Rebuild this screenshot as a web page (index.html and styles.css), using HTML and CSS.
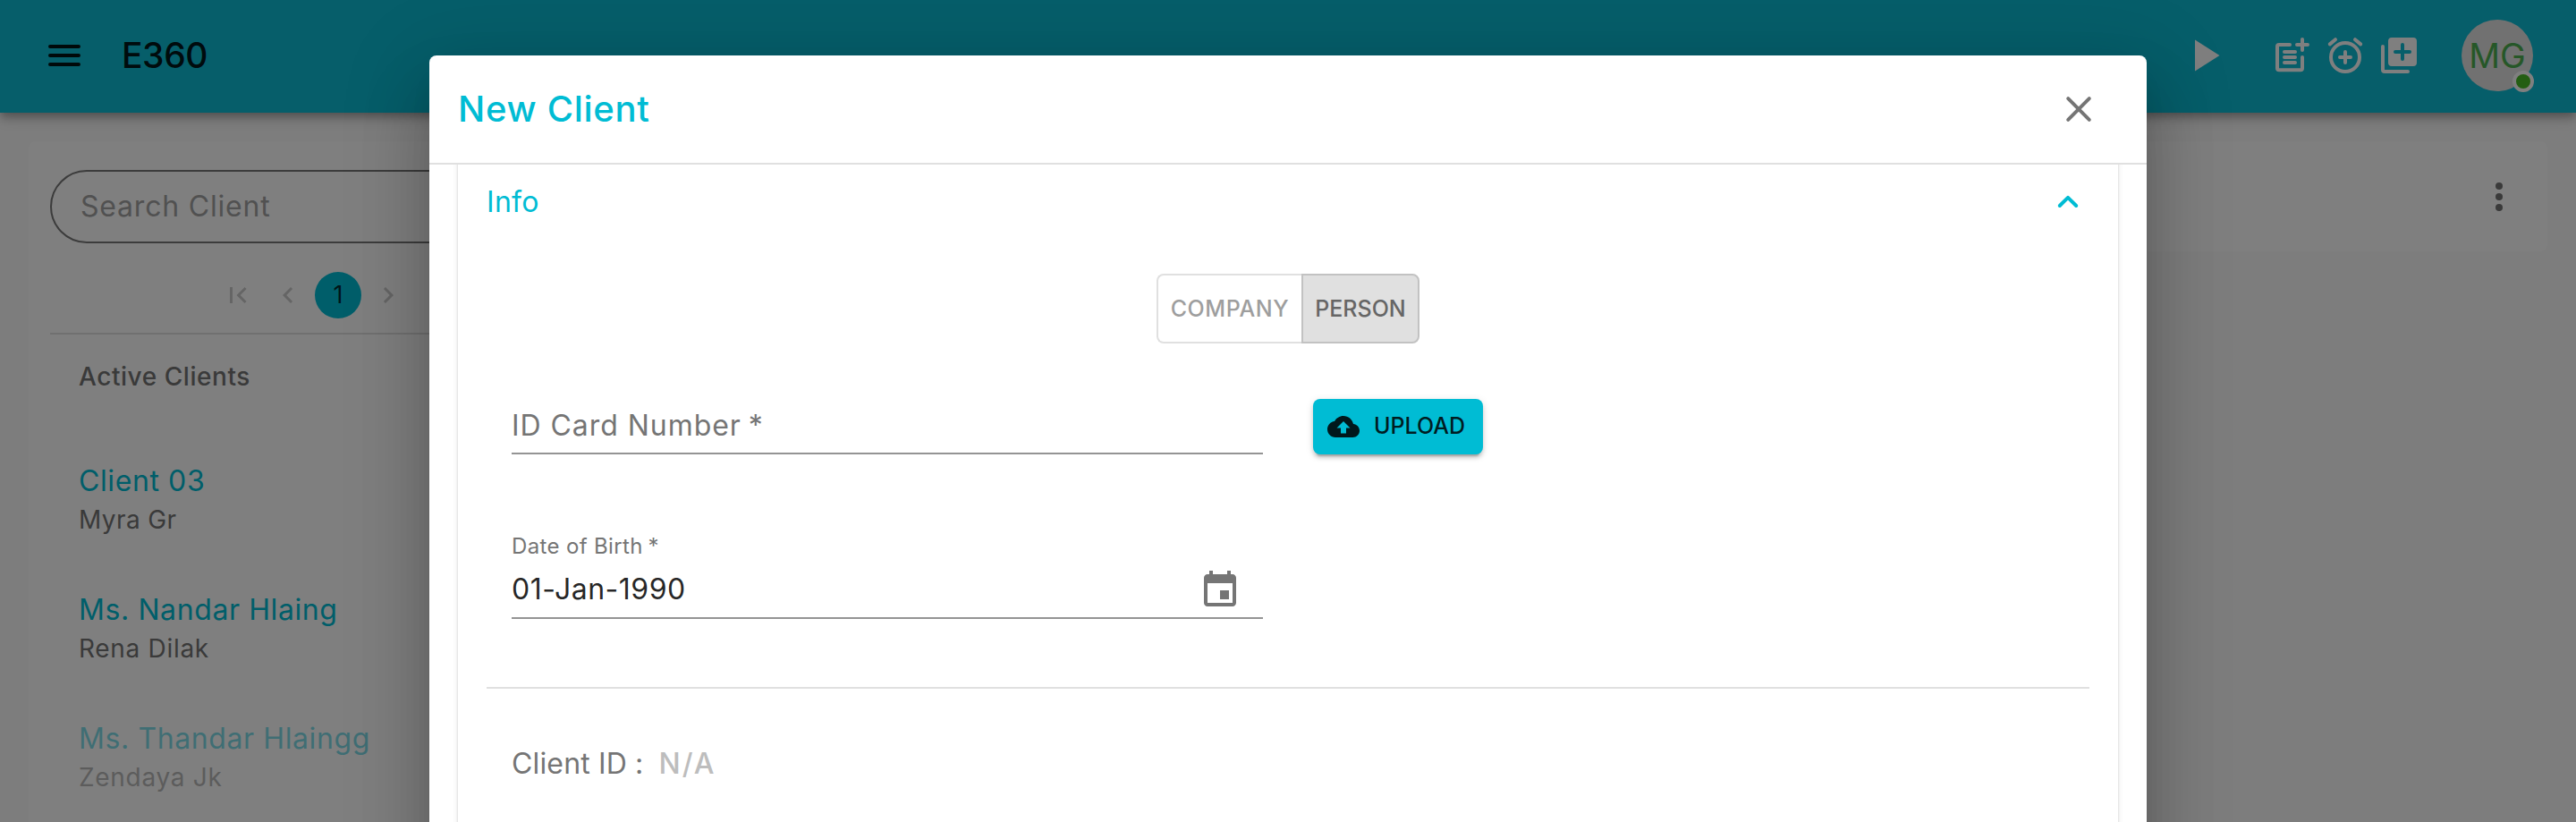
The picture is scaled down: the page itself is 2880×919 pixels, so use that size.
FILE: index.html
```html
<!DOCTYPE html>
<html lang="en">
<head>
<meta charset="utf-8">
<title>E360</title>
<link rel="stylesheet" href="styles.css">
</head>
<body>
<div class="page">
  <header class="appbar">
    <svg class="icon-48" viewBox="0 0 24 24"><path class="line" d="M4 7h16M4 12h16M4 17h16"/></svg>
    <h1 class="brand">E360</h1>
    <div class="actions">
      <svg class="play" viewBox="0 0 24 24"><path d="M8 5v14l11-7z"/></svg>
      <svg class="icon-48" viewBox="0 0 24 24"><path class="line" d="M11 6H5a1 1 0 0 0-1 1v12.1a1 1 0 0 0 1 1h12a1 1 0 0 0 1-1V13M18 3v6M15 6h6M8 10h6M8 13h6M8 16h6"/></svg>
      <svg class="icon-48" viewBox="0 0 24 24"><circle class="line" cx="12" cy="13" r="8"/><path class="line" d="M12 10v6M9 13h6M3.4 5.7l3.1-2.6M20.6 5.7l-3.1-2.6"/></svg>
      <svg class="icon-48" viewBox="0 0 24 24"><path fill-rule="evenodd" d="M8 2h12a2 2 0 0 1 2 2v12a2 2 0 0 1-2 2H8a2 2 0 0 1-2-2V4a2 2 0 0 1 2-2zM14 5a1 1 0 0 0-1 1v3h-3a1 1 0 0 0 0 2h3v3a1 1 0 0 0 2 0v-3h3a1 1 0 0 0 0-2h-3V6a1 1 0 0 0-1-1z"/><path class="line" d="M3 7v13a1 1 0 0 0 1 1h13"/></svg>
    </div>
    <div class="avatar"><span class="initials">MG</span><span class="presence"></span></div>
  </header>
  <main class="content">
    <section class="card clients">
      <div class="search"><span class="search-text">Search Client</span></div>
      <nav class="pager">
        <span class="pager-btn"><svg class="icon-36" viewBox="0 0 24 24"><path d="M18.41 16.59L13.82 12l4.59-4.59L17 6l-6 6 6 6zM6 6h2v12H6z"/></svg></span>
        <span class="pager-btn"><svg class="icon-36" viewBox="0 0 24 24"><path d="M15.41 7.41L14 6l-6 6 6 6 1.41-1.41L10.83 12z"/></svg></span>
        <span class="pager-btn current">1</span>
        <span class="pager-btn"><svg class="icon-36" viewBox="0 0 24 24"><path d="M10 6L8.59 7.41 13.17 12l-4.58 4.59L10 18l6-6z"/></svg></span>
      </nav>
      <h2 class="list-title">Active Clients</h2>
      <div class="client"><div class="name">Client 03</div><div class="sub tight">Myra Gr</div></div>
      <div class="client"><div class="name">Ms. Nandar Hlaing</div><div class="sub">Rena Dilak</div></div>
      <div class="client faded"><div class="name">Ms. Thandar Hlaingg</div><div class="sub">Zendaya Jk</div></div>
    </section>
    <section class="card detail">
      <svg class="icon-48" viewBox="0 0 24 24"><circle cx="12" cy="6" r="2"/><circle cx="12" cy="12" r="2"/><circle cx="12" cy="18" r="2"/></svg>
    </section>
  </main>
</div>
<div class="backdrop">
  <div class="dialog">
    <div class="dialog-head">
      <h2 class="dialog-title">New Client</h2>
      <svg class="icon-48" viewBox="0 0 24 24"><path class="line" d="M6.1 6.1l11.8 11.8M17.9 6.1L6.1 17.9"/></svg>
    </div>
    <div class="dialog-body">
      <div class="panel">
        <div class="panel-head">
          <span class="panel-title">Info</span>
          <svg class="icon-48" viewBox="0 0 24 24"><path class="line" d="M7.4 14l4.6-4.6 4.6 4.6"/></svg>
        </div>
        <div class="toggle">
          <span class="option company">COMPANY</span><span class="option person">PERSON</span>
        </div>
        <div class="row">
          <div class="field"><span class="placeholder">ID Card Number<span class="star"> *</span></span></div>
          <button class="upload"><svg class="icon-36" viewBox="0 0 24 24"><path d="M19.35 10.04C18.67 6.59 15.64 4 12 4 9.11 4 6.6 5.64 5.35 8.04 2.34 8.36 0 10.91 0 14c0 3.31 2.69 6 6 6h13c2.76 0 5-2.24 5-5 0-2.64-2.05-4.78-4.65-4.96zM14 13v4h-4v-4H7l5-5 5 5h-3z"/></svg><span>UPLOAD</span></button>
        </div>
        <div class="dob">
          <label class="dob-label">Date of Birth<span class="star"> *</span></label>
          <div class="dob-line"><span class="dob-value">01-Jan-1990</span>
            <svg class="icon-48" viewBox="0 0 24 24"><path d="M17 12h-5v5h5v-5zM16 1v2H8V1H6v2H5c-1.11 0-1.99.9-1.99 2L3 19c0 1.1.89 2 2 2h14c1.1 0 2-.9 2-2V5c0-1.1-.9-2-2-2h-1V1h-2zm3 18H5V8h14v11z"/></svg>
          </div>
        </div>
        <hr class="rule">
        <div class="client-id"><span class="id-label">Client ID :</span><span class="id-value">N/A</span></div>
      </div>
    </div>
  </div>
</div>
</body>
</html>
```
FILE: styles.css
```css
* { box-sizing: border-box; }
html { height: 919px; overflow: hidden; }
body { margin: 0; height: 919px; overflow: hidden; position: relative; font-family: Inter, "Open Sans", sans-serif; font-size: 32px; background: #fafafa; color: #000; }
h1, h2 { margin: 0; font-weight: 500; }
svg { display: block; fill: currentColor; flex: none; }
.line { fill: none; stroke: currentColor; stroke-width: 2; stroke-linecap: round; stroke-linejoin: round; }
.icon-48 { width: 48px; height: 48px; }
.icon-36 { width: 36px; height: 36px; }

.page { height: 919px; overflow: hidden; display: flex; flex-direction: column; }
.appbar { height: 126px; flex: none; position: relative; background: #0cbcd4; color: rgba(0,0,0,.9); display: flex; align-items: center; padding: 0 48px; padding-bottom: 2px; box-shadow: 0 4px 8px -2px rgba(0,0,0,.2), 0 8px 10px rgba(0,0,0,.14), 0 2px 20px rgba(0,0,0,.12); }
.brand { margin-left: 40px; font-size: 39px; line-height: 60px; letter-spacing: -0.4px; }
.actions { margin-left: auto; display: flex; align-items: center; gap: 12px; color: #fff; }
.play { width: 60px; height: 60px; margin-right: 32px; }
.avatar { position: relative; margin-left: 46px; width: 80px; height: 80px; border-radius: 50%; background: #e2e2e2; color: #4caf50; display: flex; align-items: center; justify-content: center; }
.initials { font-size: 38.5px; line-height: 60px; }
.presence { position: absolute; right: -1px; bottom: -1px; width: 24px; height: 24px; border-radius: 50%; border: 4px solid #fff; background: #48bc26; }

.content { display: flex; gap: 32px; align-items: flex-start; padding: 32px 32px 0; }
.card { background: #fff; border-radius: 8px; }
.clients { width: 720px; height: 800px; padding: 32px 24px; }
.search { height: 82px; border: 2px solid #787878; border-radius: 41px; padding: 0 32px 1px; display: flex; align-items: center; color: #a3a3a3; letter-spacing: .8px; }
.pager { margin-top: 32px; padding: 0 0 16px 184px; height: 70px; border-bottom: 2px solid #e0e0e0; display: flex; gap: 4px; color: #cacaca; }
.pager-btn { width: 52px; height: 52px; border-radius: 50%; display: flex; align-items: center; justify-content: center; font-size: 27px; }
.current { background: #00bcd4; color: rgba(0,0,0,.78); padding-bottom: 2px; }
.list-title { padding-left: 32px; font-size: 28px; line-height: 94px; letter-spacing: .55px; color: #757575; }
.client { height: 144px; padding: 46px 0 0 32px; }
.name { font-size: 32px; line-height: 47px; height: 48px; letter-spacing: .6px; color: #00bcd4; white-space: nowrap; }
.sub { font-size: 28px; line-height: 38px; letter-spacing: .7px; color: #757575; }
.sub.tight { letter-spacing: .4px; }
.faded { opacity: .5; }
.detail { flex: 1; height: 123px; display: flex; justify-content: flex-end; align-items: center; padding: 0 30px; color: #757575; }

.backdrop { position: absolute; inset: 0; background: rgba(0,0,0,.5); display: flex; justify-content: center; padding-top: 62px; overflow: hidden; }
.dialog { width: 1920px; height: 1714px; flex: none; background: #fff; border-radius: 8px; box-shadow: 0 22px 30px -14px rgba(0,0,0,.2), 0 48px 76px 6px rgba(0,0,0,.14), 0 18px 92px 16px rgba(0,0,0,.12); }
.dialog-head { height: 122px; border-bottom: 2px solid #e0e0e0; display: flex; align-items: center; justify-content: space-between; padding: 0 52px 0 32px; color: #757575; }
.dialog-title { font-size: 40px; line-height: 60px; letter-spacing: .7px; color: #00bcd4; }
.dialog-body { padding: 0 32px; height: 1500px; overflow: hidden; }
.panel { height: 1540px; margin-top: -20px; padding: 20px 32px 0; box-shadow: 0 4px 2px -2px rgba(0,0,0,.2), 0 2px 2px rgba(0,0,0,.14), 0 2px 6px rgba(0,0,0,.12); }
.panel-head { height: 84px; display: flex; justify-content: space-between; align-items: center; color: #00bcd4; letter-spacing: .3px; }
.panel-title { padding-bottom: 2px; }
.toggle { margin: 38px auto 0; width: 294px; height: 78px; display: flex; font-size: 25px; font-weight: 500; line-height: 74px; text-align: center; }
.option { height: 78px; border: 2px solid #e0e0e0; }
.company { width: 162px; border-right: 0; border-radius: 8px 0 0 8px; color: #9e9e9e; letter-spacing: .6px; }
.person { width: 132px; border-color: #c2c2c2; border-radius: 0 8px 8px 0; background: #e0e0e0; color: #666; }
.row { margin-top: 62px; padding-left: 28px; display: flex; gap: 56px; }
.field { width: 840px; height: 62px; border-bottom: 2px solid #949494; line-height: 59px; letter-spacing: .95px; color: #757575; }
.star { letter-spacing: -1px; }
.upload { width: 190px; height: 62px; border: 0; border-radius: 8px; padding: 0 0 2px 16px; display: flex; align-items: center; gap: 16px; background: #00bcd4; color: rgba(0,0,0,.87); font: 500 25px/60px Inter, sans-serif; box-shadow: 0 6px 2px -4px rgba(0,0,0,.2), 0 4px 4px rgba(0,0,0,.14), 0 2px 10px rgba(0,0,0,.12); }
.upload svg { margin-top: 2px; }
.dob { margin: 86px 0 0 28px; width: 840px; height: 98px; border-bottom: 2px solid #949494; }
.dob-label { display: block; font-size: 24px; line-height: 34px; letter-spacing: .35px; color: #757575; }
.dob-line { height: 62px; display: flex; justify-content: space-between; align-items: center; padding: 2px 24px 0 0; color: #757575; }
.dob-value { line-height: 60px; padding-bottom: 2px; letter-spacing: .5px; color: rgba(0,0,0,.87); }
.rule { margin: 76px 0 0; border: 0; height: 2px; background: #e0e0e0; }
.client-id { margin: 60px 0 0 28px; height: 48px; display: flex; gap: 17px; line-height: 47px; letter-spacing: .15px; color: #757575; }
.id-value { color: #bdbdbd; font-weight: 500; letter-spacing: 2px; }
```
